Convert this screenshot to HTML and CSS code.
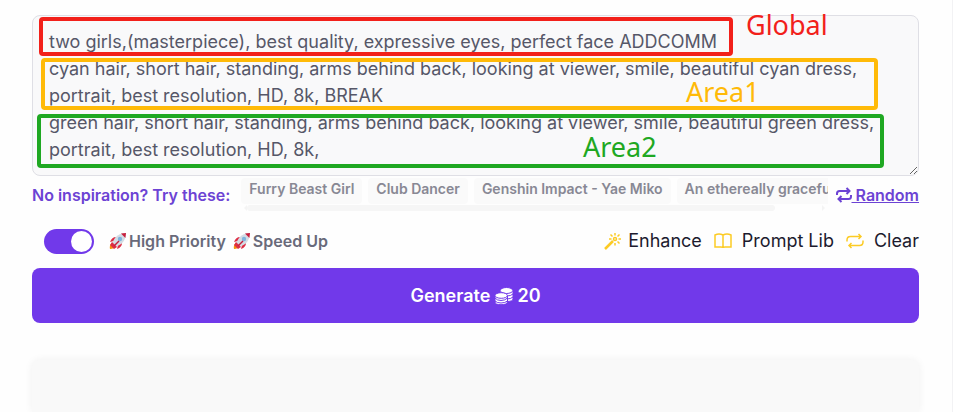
FILE: index.html
```html
<!DOCTYPE html>
<html lang="en">
  <head>
    <meta charset="utf-8">
    <meta name="viewport" content="width=device-width, initial-scale=1">
    <title>Generate</title>
    <link rel="stylesheet" href="styles.css">
  </head>
<body>
  <main class="page">
    <div class="prompt">
      <textarea class="prompt-input" aria-label="Prompt" spellcheck="false">two girls,(masterpiece), best quality, expressive eyes, perfect face ADDCOMM
cyan hair, short hair, standing, arms behind back, looking at viewer, smile, beautiful cyan dress, portrait, best resolution, HD, 8k, BREAK
green hair, short hair, standing, arms behind back, looking at viewer, smile, beautiful green dress, portrait, best resolution, HD, 8k,</textarea>
      <!-- marked regions of the prompt -->
      <div class="mark mark-global"></div>
      <div class="mark mark-area1"></div>
      <div class="mark mark-area2"></div>
      <span class="mark-label label-global">Global</span>
      <span class="mark-label label-area1">Area1</span>
      <span class="mark-label label-area2">Area2</span>
    </div>

    <div class="ideas">
      <span class="ideas-title">No inspiration? Try these:</span>
      <div class="ideas-scroll">
        <div class="chips">
          <button class="chip" type="button">Furry Beast Girl</button>
          <button class="chip" type="button">Club Dancer</button>
          <button class="chip" type="button">Genshin Impact - Yae Miko</button>
          <button class="chip" type="button">An ethereally graceful</button>
        </div>
        <div class="track">
          <span class="arrow arrow-left"></span>
          <span class="thumb"></span>
          <span class="arrow arrow-right"></span>
        </div>
      </div>
      <a class="random" href="#random"><svg class="random-icon" viewBox="0 0 16 16" aria-hidden="true"><path d="M1 8V6.500Q1 4 3.500 4H13M10.500 1L13.500 4L10.500 7M15 8V9.500Q15 12 12.500 12H3M5.500 9L2.500 12L5.500 15"/></svg>&nbsp;Random</a>
    </div>

    <div class="options">
      <label class="priority">
        <input class="switch" type="checkbox" role="switch" checked>
        <span class="perk"><svg class="rocket" viewBox="0 0 18 18" aria-hidden="true"><path fill="#dd2e44" d="M7 5Q3 5 1 10L5 9ZM13 11Q13 15 8 17L9 13Z"/><path fill="#f4900c" d="M3 11Q0 13 1 17Q5 17 7 14Z"/><path fill="#d3dce4" d="M17 1Q10 1 6 6L3 11L7 15L12 12Q17 8 17 1Z"/><path fill="#c81e3c" d="M17 1L12 1.600L16.400 6Z"/><path fill="#dd2e44" d="M3 10L8 15L5 17L1 13Z"/><circle cx="11" cy="7" r="2.200" fill="#7fb4dd"/><path d="M10 9L5 14" stroke="#c81e3c" stroke-width="1.500"/></svg>High Priority</span>
        <span class="perk"><svg class="rocket" viewBox="0 0 18 18" aria-hidden="true"><path fill="#dd2e44" d="M7 5Q3 5 1 10L5 9ZM13 11Q13 15 8 17L9 13Z"/><path fill="#f4900c" d="M3 11Q0 13 1 17Q5 17 7 14Z"/><path fill="#d3dce4" d="M17 1Q10 1 6 6L3 11L7 15L12 12Q17 8 17 1Z"/><path fill="#c81e3c" d="M17 1L12 1.600L16.400 6Z"/><path fill="#dd2e44" d="M3 10L8 15L5 17L1 13Z"/><circle cx="11" cy="7" r="2.200" fill="#7fb4dd"/><path d="M10 9L5 14" stroke="#c81e3c" stroke-width="1.500"/></svg>Speed Up</span>
      </label>
      <div class="tools">
        <button class="tool" type="button"><svg class="tool-icon" viewBox="0 0 18 18" aria-hidden="true"><path stroke-width="2.500" d="M1 17L9 9"/><path stroke-width="1.500" d="M11 1V3.500M11 11V13.500M5 7H7.500M14.500 7H17M6.500 2.500L8.500 4.500M13.500 9.500L15.500 11.500M15.500 2.500L13.500 4.500"/><circle cx="11" cy="7" r="1.500" stroke-width="1.500"/></svg>Enhance</button>
        <button class="tool tool-book" type="button"><svg class="tool-icon" viewBox="0 0 18 18" aria-hidden="true"><path d="M1 15V3Q5 1 9 3Q13 1 17 3V15H11Q9 15 9 16Q9 15 7 15ZM9 3V16"/></svg>Prompt Lib</button>
        <button class="tool tool-clear" type="button"><svg class="tool-icon" viewBox="0 0 18 18" aria-hidden="true"><path d="M1 9.500V8Q1 4.500 4.500 4.500H15M12.500 2L15 4.500L12.500 7M17 8.500V10Q17 13.500 13.500 13.500H3M5.500 11L3 13.500L5.500 16"/></svg>Clear</button>
      </div>
    </div>

    <button class="generate" type="button">Generate <svg class="coins" viewBox="0 0 18 18" aria-hidden="true"><g fill="#fff" stroke="#7139ea"><path d="M5 3.500V12Q5 14.500 11.500 14.500T18 12V3.500Z"/><path fill="none" d="M5 7Q7 9 11.500 9T18 7M5 10Q7 12 11.500 12T18 10"/><ellipse cx="11.500" cy="3.500" rx="6.300" ry="3"/><path d="M0 8.500V15Q0 17.700 6 17.700T12.500 15V8.500Z"/><path fill="none" d="M0 11Q2 13.500 6 13.500T12.500 11M0 14Q2 16 6 16T12.500 14"/><ellipse cx="6.200" cy="8.500" rx="6.200" ry="2.800"/></g></svg> 20</button>

    <section class="result" aria-label="Result"></section>
  </main>
</body>
</html>
```
FILE: styles.css
```css
* {
  box-sizing: border-box;
}
body {
  margin: 0;
  background: #fefefe;
  color: #1c1b2e;
  font-family: Inter, "Liberation Sans", sans-serif;
  overflow: hidden;
}
button {
  border: 0;
  font-family: inherit;
  cursor: pointer;
}
.page {
  display: flex;
  flex-direction: column;
  min-height: 100vh;
  padding: 15px 33px 0 32px;
  border-right: 1px solid #f2f2f4;
}

/* prompt */
.prompt {
  position: relative;
}
.prompt-input {
  display: block;
  width: 100%;
  height: 161px;
  padding: 12px 16px;
  border: 1px solid #dfdfe5;
  border-radius: 8px;
  background: #f9f9fa;
  color: #565768;
  font: 400 18px/27px Inter, "Liberation Sans", sans-serif;
  outline: 0;
  resize: vertical;
  overflow: hidden;
}
.mark {
  position: absolute;
  border: 4px solid;
  border-radius: 4px;
  pointer-events: none;
}
.mark-global {
  top: 2px;
  left: 7px;
  width: 694px;
  height: 39px;
  border-color: #f2201a;
}
.mark-area1 {
  top: 43px;
  left: 9px;
  width: 837px;
  height: 52px;
  border-color: #ffba08;
}
.mark-area2 {
  top: 99px;
  left: 5px;
  width: 847px;
  height: 54px;
  border-color: #1fa822;
}
.mark-label {
  position: absolute;
  font: 27px/32px "Noto Sans", sans-serif;
  pointer-events: none;
}
.label-global {
  top: -6px;
  left: 714px;
  color: #f2201a;
}
.label-area1 {
  top: 61px;
  left: 654px;
  color: #ffba08;
}
.label-area2 {
  top: 116px;
  left: 551px;
  color: #1fa822;
}

/* suggestions */
.ideas {
  display: flex;
  align-items: center;
  height: 38px;
  color: #6c43d4;
  font-size: 16px;
  font-weight: 600;
  white-space: nowrap;
}
.ideas-scroll {
  flex: 1;
  min-width: 0;
  margin: 0 8px 0 11px;
  overflow: hidden;
}
.chips {
  display: flex;
  gap: 6px;
  overflow: hidden;
}
.chip {
  flex: none;
  padding: 0 8px 4px;
  border-radius: 4px;
  background: #fafafa;
  color: #888894;
  font-size: 14px;
  font-weight: 600;
  line-height: 22px;
}
.track {
  display: flex;
  align-items: center;
  height: 8px;
}
.thumb {
  width: 90%;
  height: 6px;
  border-radius: 3px;
  background: #f6f6f6;
}
.arrow {
  border: 3px solid transparent;
}
.arrow-left {
  border-right-color: #f4f4f4;
}
.arrow-right {
  margin-left: auto;
  border-left-color: #f4f4f4;
}
.random {
  color: inherit;
}
.random-icon {
  width: 16px;
  height: 16px;
  vertical-align: -2px;
  fill: none;
  stroke: currentColor;
  stroke-width: 2;
}

/* options */
.options {
  display: flex;
  align-items: center;
  justify-content: space-between;
  height: 54px;
  padding-left: 12px;
}
.priority {
  display: flex;
  align-items: center;
  color: #696a7a;
  font-size: 16px;
  font-weight: 600;
}
.switch {
  appearance: none;
  width: 50px;
  height: 25px;
  margin: 0 15px 0 0;
  padding: 2px;
  border-radius: 13px;
  background: #ccc;
  cursor: pointer;
}
.switch::before {
  content: "";
  display: block;
  width: 21px;
  height: 21px;
  border-radius: 50%;
  background: #fff;
}
.switch:checked {
  background: #7139ea;
}
.switch:checked::before {
  margin-left: auto;
}
.perk {
  display: flex;
  align-items: center;
  gap: 2px;
  margin-right: 7px;
}
.rocket {
  width: 18px;
  height: 18px;
}
.tools {
  display: flex;
  gap: 12px;
}
.tool {
  display: flex;
  align-items: center;
  gap: 6px;
  padding: 0;
  background: none;
  color: #1c1b2e;
  font-size: 18px;
  line-height: 24px;
}
.tool-book,
.tool-clear {
  gap: 10px;
}
.tool-icon {
  width: 18px;
  height: 18px;
  fill: none;
  stroke: #fccb25;
  stroke-width: 1.5;
}

.generate {
  height: 55px;
  border-radius: 8px;
  background: #7139ea;
  color: #fff;
  font-size: 18px;
  font-weight: 600;
}
.coins {
  width: 18px;
  height: 18px;
  vertical-align: -3px;
}

.result {
  flex: 1;
  margin-top: 37px;
  border-radius: 8px 8px 0 0;
  background: #f9f9f9;
  box-shadow: 0 0 8px #f1f1f1;
}
```
